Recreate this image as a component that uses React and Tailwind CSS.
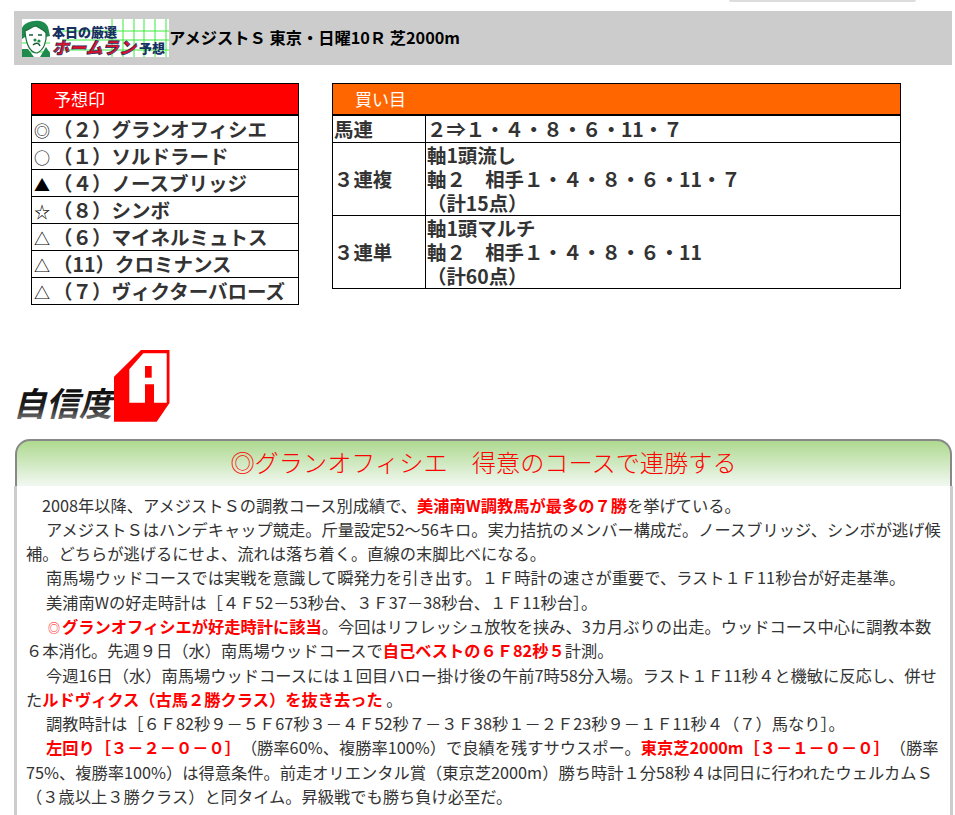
import React from "react";

const font = { fontFamily: '"Noto Sans CJK JP", "Noto Sans", sans-serif' };

const Logo = () => (
  <svg width="147" height="38" viewBox="0 0 147 38" className="block shrink-0">
    <rect width="147" height="38" fill="#fff" />
    <g stroke="#3bea3b" strokeWidth="1">
      {[90, 101, 112, 122, 133, 144].map((x) => (
        <line key={x} x1={x} y1="0" x2={x} y2="38" />
      ))}
      {[12, 21, 31].map((y) => (
        <line key={y} x1="40" y1={y} x2="147" y2={y} />
      ))}
      <line x1="0" y1="24" x2="28" y2="24" />
      <line x1="0" y1="33" x2="28" y2="33" />
    </g>
    <path d="M0 9 C3 1 22 -2 26 8 L28 17 L24 18 L3 18 L0 20 Z" fill="#1f8a4e" />
    <path d="M3 12 C8 10 11 7 14 7 C18 9 22 11 24 14 C25 22 22 31 15 34 C9 34 4 27 3 12 Z" fill="#fff" stroke="#1a6b3e" strokeWidth="1.2" />
    <path d="M0 30 L6 30 L12 38 L0 38 Z M18 38 L24 28 L28 34 L28 38 Z" fill="#1f8a4e" />
    <path d="M7 16 h4 M16 16 h4 M11 26 c3 -3 6 -2 7 1" stroke="#1a5c38" strokeWidth="1.4" fill="none" />
    <circle cx="13" cy="21" r="1.6" fill="#1f8a4e" />
    <circle cx="17" cy="22" r="1.6" fill="#1f8a4e" />
    <text x="30" y="18" fontSize="13" fontWeight="900" fill="#16305f" style={font}>
      本日の厳選
    </text>
    <text x="30" y="35" fontSize="17" fontWeight="900" fontStyle="italic" fill="#e0102a" stroke="#16305f" strokeWidth="0.7" style={font}>
      ホームラン
    </text>
    <text x="117" y="34" fontSize="13" fontWeight="900" fill="#16305f" style={font}>
      予想
    </text>
  </svg>
);

const Confidence = () => (
  <svg width="157" height="72" viewBox="0 0 157 72" className="block">
    <defs>
      <linearGradient id="jishin" x1="0" y1="0" x2="0" y2="1">
        <stop offset="0" stopColor="#000" />
        <stop offset="0.6" stopColor="#222" />
        <stop offset="1" stopColor="#999" />
      </linearGradient>
    </defs>
    <text x="-1" y="66" fontSize="33" fontWeight="700" fontStyle="italic" fill="url(#jishin)" style={font}>
      自信度
    </text>
    <polygon points="100,26.7 127,0 155.5,0 155.5,53 142.7,71.7 100,71.7" fill="#f00" />
    <polygon points="115.3,19.3 129.3,3.3 152.7,3.3 152.7,52.7 140,52.7 140,34.3 131,34.3 131,52.7 115.3,52.7" fill="#fff" />
    <rect x="131" y="16" width="6.7" height="11.7" fill="#f00" />
  </svg>
);

const marks = [
  ["◎", "（２）グランオフィシエ"],
  ["○", "（１）ソルドラード"],
  ["▲", "（４）ノースブリッジ"],
  ["☆", "（８）シンボ"],
  ["△", "（６）マイネルミュトス"],
  ["△", "（11）クロミナンス"],
  ["△", "（７）ヴィクターバローズ"],
];

const R = ({ children, className = "" }) => <span className={`font-bold text-[#f00] ${className}`}>{children}</span>;

const Line = ({ children, className = "" }) => <p className={`whitespace-nowrap ${className}`}>{children}</p>;

export default function App() {
  return (
    <div className="h-[815px] w-[955px] overflow-hidden bg-white text-[#333]" style={font}>
      <div className="flex justify-end pr-[39px]">
        <div className="h-[2px] w-[187px] rounded-b bg-[#ddd]" />
      </div>

      <div className="ml-[14px] mr-[3px] mt-[9px] flex h-[54px] items-center bg-[#ccc] pl-[8px]">
        <Logo />
        <h1 className="mb-[2px] text-[16.25px] font-bold text-black">アメジストＳ 東京・日曜10Ｒ 芝2000m</h1>
      </div>

      <div className="mt-[18px] flex items-start gap-[33px] pl-[31px]">
        <table className="w-[268px] border-collapse border border-black text-[19.5px] font-bold leading-[24px]">
          <thead>
            <tr>
              <th className="h-[31px] border-b-2 border-black bg-[#f00] pl-[22px] text-left text-[17px] font-normal text-white">
                予想印
              </th>
            </tr>
          </thead>
          <tbody>
            {marks.map(([mark, name]) => (
              <tr key={name}>
                <td className="whitespace-nowrap border border-black py-[1px] pl-[1px]">
                  <span className="inline-block w-[20px] pl-[1px] align-baseline text-[16px] font-normal leading-none text-black">{mark}</span>
                  {name}
                </td>
              </tr>
            ))}
          </tbody>
        </table>

        <table className="w-[569px] border-collapse border border-black text-[19.4px] font-bold leading-[24.1px]">
          <thead>
            <tr>
              <th colSpan="2" className="h-[31px] border-b-2 border-black bg-[#f60] pl-[22px] text-left text-[17px] font-normal text-white">
                買い目
              </th>
            </tr>
          </thead>
          <tbody>
            <tr>
              <td className="w-[93px] border border-black py-[1px] pl-[1px]">馬連</td>
              <td className="border border-black py-[1px] pl-[1px]">２⇒１・４・８・６・11・７</td>
            </tr>
            <tr>
              <td className="border border-black pl-[1px]">３連複</td>
              <td className="border border-black pl-[1px]">
                軸1頭流し
                <br />
                軸２　相手１・４・８・６・11・７
                <br />
                （計15点）
              </td>
            </tr>
            <tr>
              <td className="border border-black pl-[1px]">３連単</td>
              <td className="border border-black pl-[1px]">
                軸1頭マルチ
                <br />
                軸２　相手１・４・８・６・11
                <br />
                （計60点）
              </td>
            </tr>
          </tbody>
        </table>
      </div>

      <div className="ml-[14px] mt-[45px]">
        <Confidence />
      </div>

      <div className="ml-[15px] mr-[3px] mt-[17px] rounded-t-[15px] border-x-2 border-t-2 border-[#888] bg-gradient-to-b from-[#aed98f] to-[#f2f8f2] pb-[3px] text-center">
        <h2 className="text-[24.2px] font-light leading-[42px] text-[#f00]">◎グランオフィシエ　得意のコースで連勝する</h2>
      </div>

      <div className="ml-[14px] mr-[2px] border-x-[3px] border-[#ccc] pb-[20px] pl-[9px] pt-[7px] text-[16.25px] leading-[24.3px]">
        <Line className="pl-[16px]">
          2008年以降、アメジストＳの調教コース別成績で、<R>美浦南W調教馬が最多の７勝</R>を挙げている。
        </Line>
        <Line className="pl-[20px]">アメジストＳはハンデキャップ競走。斤量設定52～56キロ。実力拮抗のメンバー構成だ。ノースブリッジ、シンボが逃げ候</Line>
        <Line>補。どちらが逃げるにせよ、流れは落ち着く。直線の末脚比べになる。</Line>
        <Line className="pl-[20px]">南馬場ウッドコースでは実戦を意識して瞬発力を引き出す。１Ｆ時計の速さが重要で、ラスト１Ｆ11秒台が好走基準。</Line>
        <Line className="pl-[20px]">美浦南Wの好走時計は［４Ｆ52－53秒台、３Ｆ37－38秒台、１Ｆ11秒台］。</Line>
        <Line className="pl-[20px]">
          <span className="inline-block w-[16px] text-center text-[12px] leading-none text-[#f00]">◎</span>
          <R>グランオフィシエが好走時計に該当</R>。今回はリフレッシュ放牧を挟み、3カ月ぶりの出走。ウッドコース中心に調教本数
        </Line>
        <Line>
          ６本消化。先週９日（水）南馬場ウッドコースで<R>自己ベストの６Ｆ82秒５</R>計測。
        </Line>
        <Line className="pl-[20px]">今週16日（水）南馬場ウッドコースには１回目ハロー掛け後の午前7時58分入場。ラスト１Ｆ11秒４と機敏に反応し、併せ</Line>
        <Line>
          た<R>ルドヴィクス（古馬２勝クラス）を抜き去った</R> 。
        </Line>
        <Line className="pl-[20px]">調教時計は［６Ｆ82秒９－５Ｆ67秒３－４Ｆ52秒７－３Ｆ38秒１－２Ｆ23秒９－１Ｆ11秒４（７）馬なり］。</Line>
        <Line className="pl-[20px]">
          <R className="mr-[8px]">左回り［３－２－０－０］</R>（勝率60%、複勝率100%）で良績を残すサウスポー。<R className="mr-[8px]">東京芝2000m［３－１－０－０］</R>（勝率
        </Line>
        <Line>75%、複勝率100%）は得意条件。前走オリエンタル賞（東京芝2000m）勝ち時計１分58秒４は同日に行われたウェルカムＳ</Line>
        <Line>（３歳以上３勝クラス）と同タイム。昇級戦でも勝ち負け必至だ。</Line>
      </div>
    </div>
  );
}
